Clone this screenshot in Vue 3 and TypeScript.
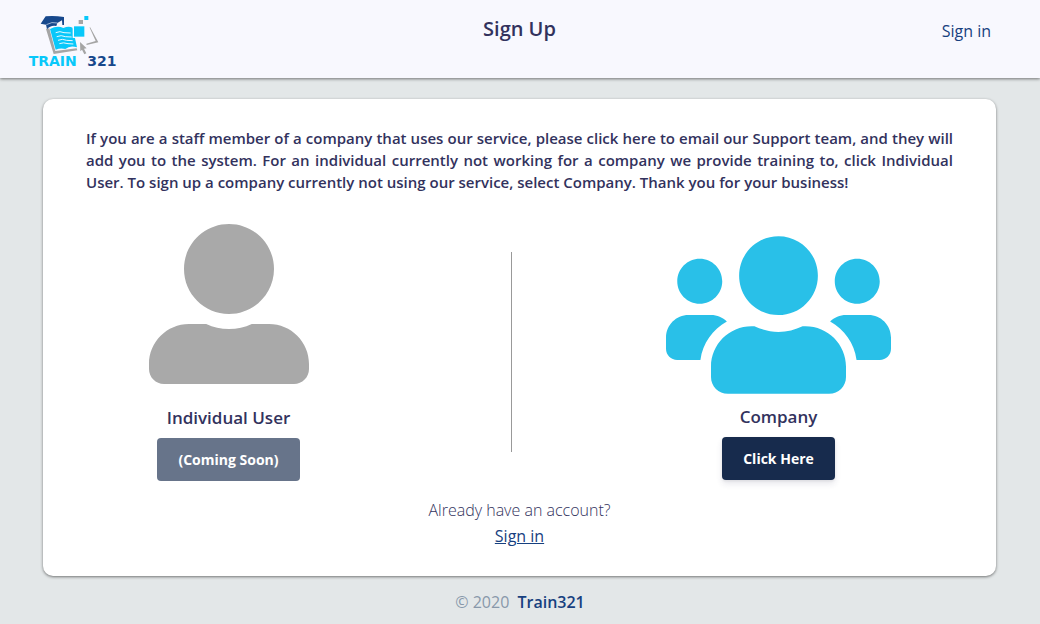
<script setup lang="ts">
interface Choice {
  id: string
  title: string
  action: string
  viewBox: string
  path: string
  available: boolean
}

const individual: Choice = {
  id: 'individual',
  title: 'Individual User',
  action: '(Coming Soon)',
  viewBox: '0 0 512 512',
  path: 'M256 288c79.5 0 144-64.5 144-144S335.5 0 256 0 112 64.5 112 144s64.5 144 144 144zm128 32h-55.1c-22.2 10.2-46.9 16-72.9 16s-50.6-5.8-72.9-16H128C57.3 320 0 377.3 0 448v16c0 26.5 21.5 48 48 48h416c26.5 0 48-21.5 48-48v-16c0-70.7-57.3-128-128-128z',
  available: false,
}

const company: Choice = {
  id: 'company',
  title: 'Company',
  action: 'Click Here',
  viewBox: '0 0 640 512',
  path: 'M96 224c35.3 0 64-28.7 64-64s-28.7-64-64-64-64 28.7-64 64 28.7 64 64 64zm448 0c35.3 0 64-28.7 64-64s-28.7-64-64-64-64 28.7-64 64 28.7 64 64 64zm32 32h-64c-17.6 0-33.5 7.1-45.1 18.6 40.3 22.1 68.9 62 75.1 109.4h66c17.7 0 32-14.3 32-32v-32c0-35.3-28.7-64-64-64zm-256 0c61.9 0 112-50.1 112-112S381.9 32 320 32 208 82.1 208 144s50.1 112 112 112zm76.8 32h-8.3c-20.8 10-43.9 16-68.5 16s-47.6-6-68.5-16h-8.3C179.6 288 128 339.6 128 403.2V432c0 26.5 21.5 48 48 48h288c26.5 0 48-21.5 48-48v-28.8c0-63.6-51.6-115.2-115.2-115.2zm-223.7-13.4C161.5 263.1 145.6 256 128 256H64c-35.3 0-64 28.7-64 64v32c0 17.7 14.3 32 32 32h65.9c6.3-47.4 34.9-87.3 75.2-109.4z',
  available: true,
}

const choices: Choice[] = [individual, company]
</script>

<template>
  <div class="page">
    <header class="topbar">
      <a class="brand" href="#" aria-label="Train 321">
        <svg class="logo" viewBox="24 30 282 168" aria-hidden="true">
          <path d="M78 72 L88 70 L106 138 L170 130 L172 136 L101 147 Z" fill="#a5a5a5" />
          <path d="M90 72 Q112 60 130 69 Q146 62 158 68 L171 127 Q150 120 136 132 Q122 128 107 134 Z" fill="#08c8fa" />
          <g fill="none" stroke="#e8f9ff" stroke-width="3">
            <path d="M107 83 Q120 77 132 83 L152 84" />
            <path d="M110 95 Q124 89 136 95 L155 96" />
            <path d="M114 106 Q127 100 140 106 L158 107" />
            <path d="M118 116 Q130 111 144 116 L160 117" />
          </g>
          <path d="M77 34 Q101 31 132 36 L132 60 L127 60 L126 46 L112 54 L109 63 Q91 60 81 73 L78 59 L62 56 Z" fill="#17488c" />
          <path d="M79 59 Q96 49 112 54" fill="none" stroke="#dfe8f5" stroke-width="2" />
          <rect x="158" y="60" width="39" height="39" fill="#f8f8fe" />
          <rect x="162" y="64" width="31" height="31" fill="#08c8fa" />
          <rect x="176" y="45" width="13" height="12" fill="#a5a5a5" />
          <rect x="193" y="33" width="12" height="12" fill="#08c8fa" />
          <path d="M210 66 L235 112 L200 120 L199 116 L227 108 L209 68 Z" fill="#a5a5a5" />
          <path d="M180 111 L200 130 L192 131 L199 145 L193 148 L186 134 L181 139 Z" fill="#a5a5a5" />
          <text class="wordmark" x="26" y="183"><tspan fill="#08c8fa">TRAIN</tspan><tspan fill="#17488c" x="202">321</tspan></text>
        </svg>
      </a>
      <h1>Sign Up</h1>
      <a class="topbar-link" href="#signin">Sign in</a>
    </header>

    <main class="card">
      <p class="intro">
        If you are a staff member of a company that uses our service, please click here to email our Support
        team, and they will add you to the system. For an individual currently not working for a company we
        provide training to, click Individual User. To sign up a company currently not using our service,
        select Company. Thank you for your business!
      </p>

      <div class="choices">
        <section v-for="choice in choices" :key="choice.id" class="choice" :class="choice.id">
          <svg class="choice-icon" :viewBox="choice.viewBox" aria-hidden="true"><path :d="choice.path" /></svg>
          <h2>{{ choice.title }}</h2>
          <button type="button" :disabled="!choice.available">{{ choice.action }}</button>
        </section>
        <div class="divider"></div>
      </div>

      <div class="account">
        <p>Already have an account?</p>
        <a href="#signin">Sign in</a>
      </div>
    </main>

    <footer>© 2020 <a href="#home">Train321</a></footer>
  </div>
</template>

<style>
body {
  margin: 0;
  background: #e3e7e8;
}
</style>

<style scoped>
.page {
  min-height: 100vh;
  box-sizing: border-box;
  font-family: "Open Sans", "Noto Sans", sans-serif;
  font-size: 16px;
  line-height: 26px;
  color: #32325d;
}

.topbar {
  display: grid;
  grid-template-columns: 1fr auto 1fr;
  align-items: start;
  height: 78px;
  box-sizing: border-box;
  padding: 15px 49px 0 28px;
  background: #f8f8fe;
  box-shadow: 0 1px 3px rgba(0, 0, 0, 0.5);
}

.brand {
  justify-self: start;
}

.logo {
  display: block;
  width: 94px;
  height: 56px;
}

.wordmark {
  font-family: "DejaVu Sans", sans-serif;
  font-size: 42px;
  font-weight: 700;
}

h1 {
  margin: 0 0 0 20px;
  font-size: 20px;
  font-weight: 600;
  line-height: 28px;
}

.topbar-link {
  justify-self: end;
  padding-top: 3px;
  color: #17407f;
  text-decoration: none;
}

.card {
  margin: 21px 44px 0 43px;
  padding: 28px 43px 27px;
  background: #fff;
  border-radius: 10px;
  box-shadow: 0 1px 3px rgba(0, 0, 0, 0.5);
}

.intro {
  margin: 0;
  font-size: 15px;
  font-weight: 600;
  line-height: 22px;
  text-align: justify;
}

.choices {
  display: grid;
  grid-template-columns: 57fr 56fr 51fr;
  margin-top: 31px;
  padding-right: 47px;
}

.choice {
  grid-row: 1;
  display: flex;
  flex-direction: column;
  align-items: center;
}

.individual {
  grid-column: 1;
}

.company {
  grid-column: 3;
}

.choice-icon {
  flex: none;
  height: 160px;
  width: 160px;
  fill: #a9a9a9;
}

.company .choice-icon {
  width: 225px;
  height: 180px;
  margin-top: 1px;
  fill: #29c0e8;
}

h2 {
  margin: 20px 0 6px;
  font-size: 17px;
  font-weight: 600;
  line-height: 28px;
}

.company h2 {
  margin-top: -2px;
}

button {
  height: 43px;
  padding: 0 21px;
  border: 0;
  border-radius: 4px;
  background: #172b4d;
  color: #fff;
  font-family: inherit;
  font-size: 14px;
  font-weight: 700;
  box-shadow: 0 4px 6px rgba(50, 50, 93, 0.11), 0 1px 3px rgba(0, 0, 0, 0.08);
}

button:disabled {
  opacity: 0.65;
  box-shadow: none;
}

.divider {
  grid-row: 1;
  grid-column: 2;
  justify-self: center;
  width: 1px;
  height: 200px;
  margin-top: 28px;
  background: #999;
}

.account {
  margin-top: 16px;
  text-align: center;
}

.account p {
  margin: 0;
  font-weight: 300;
}

.account a {
  color: #17407f;
}

footer {
  padding: 13px 0 8px;
  text-align: center;
  color: #8898aa;
}

footer a {
  margin-left: 4px;
  color: #17407f;
  font-weight: 600;
  text-decoration: none;
}
</style>
